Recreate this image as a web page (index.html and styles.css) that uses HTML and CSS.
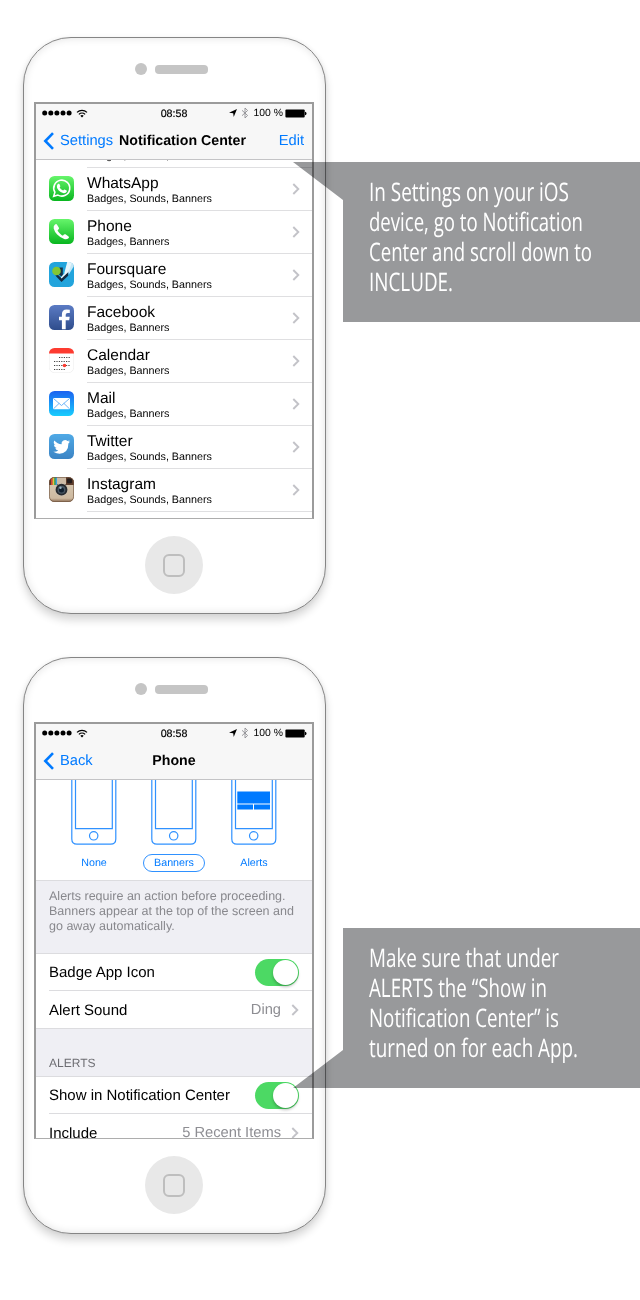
FILE: index.html
```html
<!DOCTYPE html>
<html lang="en">
<head>
<meta charset="utf-8">
<title>Notification Center setup</title>
<link rel="stylesheet" href="styles.css">
</head>
<body>
<svg class="defs" aria-hidden="true">
  <defs>
    <linearGradient id="green" x1="0" y1="0" x2="0" y2="1"><stop offset="0" stop-color="#66f56b"/><stop offset="1" stop-color="#08b61f"/></linearGradient>
    <linearGradient id="navy" x1="0" y1="0" x2="0" y2="1"><stop offset="0" stop-color="#5b7bc4"/><stop offset="1" stop-color="#2f4d8c"/></linearGradient>
    <linearGradient id="sky" x1="0" y1="0" x2="0" y2="1"><stop offset="0" stop-color="#1b62f0"/><stop offset="1" stop-color="#18cdfd"/></linearGradient>
    <linearGradient id="tweet" x1="0" y1="0" x2="0" y2="1"><stop offset="0" stop-color="#4fa9e6"/><stop offset="1" stop-color="#3b84c4"/></linearGradient>
    <linearGradient id="tan" x1="0" y1="0" x2="0" y2="1"><stop offset="0" stop-color="#d9cdb8"/><stop offset=".85" stop-color="#cdb9a0"/><stop offset="1" stop-color="#8a6a50"/></linearGradient>
    <clipPath id="tile"><rect width="25" height="25" rx="5.5"/></clipPath>
    <symbol id="chevron" viewBox="0 0 8 12"><path d="M1.300 1l5 5-5 5" fill="none" stroke="#c3c3c8" stroke-width="1.900"/></symbol>
    <symbol id="back" viewBox="0 0 12 18"><path d="M10 1.200L2.300 9l7.700 7.800" fill="none" stroke="#007aff" stroke-width="2.600"/></symbol>
    <symbol id="dots" viewBox="0 0 30 6"><g><circle cx="2.700" cy="3" r="2.500"/><circle cx="8.800" cy="3" r="2.500"/><circle cx="14.900" cy="3" r="2.500"/><circle cx="21" cy="3" r="2.500"/><circle cx="27.100" cy="3" r="2.500"/></g></symbol>
    <symbol id="wifi" viewBox="0 0 12 9"><path d="M1 3.400a7.300 7.300 0 0 1 10 0M2.900 5.400a4.500 4.500 0 0 1 6.200 0" fill="none" stroke="#000" stroke-width="1.300"/><path d="M4.300 6.800a2.400 2.400 0 0 1 3.400 0L6 8.600z"/></symbol>
    <symbol id="locate" viewBox="0 0 8 8"><path d="M8 0L4.700 8 4.200 4.200 0 3.700z"/></symbol>
    <symbol id="bluetooth" viewBox="0 0 8 12"><path d="M1 3.300l5.600 5.200L4 11V1l2.600 2.500L1 8.700" fill="none" stroke="#8e8e93" stroke-width=".9"/></symbol>
    <symbol id="battery" viewBox="0 0 22 9"><rect x=".4" y=".5" width="19.300" height="8" rx="1"/><path d="M20 2.700q1.500.3 1.500 1.800T20 6.300z"/></symbol>
    <symbol id="handset" viewBox="0 0 46 70"><g fill="none" stroke="#2f91ff" stroke-width="1.200"><path d="M.8 0v59q0 5.200 5.200 5.200h33.600q5.200 0 5.200-5.200V0"/><path d="M4.500 0v48.700h36.800V0"/><circle cx="22.700" cy="55.800" r="4.200"/></g></symbol>
  </defs>
</svg>
<main class="guide">
  <section class="step">
    <div class="phone">
      <div class="speaker"><i class="camera"></i><i class="slot"></i></div>
      <div class="screen">
        <header class="bar">
          <div class="status"><span class="signal"><svg class="dots"><use href="#dots"/></svg><svg class="wifi"><use href="#wifi"/></svg></span><span class="time">08:58</span><span class="power"><svg class="locate"><use href="#locate"/></svg><svg class="bluetooth"><use href="#bluetooth"/></svg><span class="charge">100 %</span><svg class="battery"><use href="#battery"/></svg></span></div>
          <nav class="nav"><span class="back"><svg><use href="#back"/></svg>Settings</span><span class="title">Notification Center</span><span class="edit">Edit</span></nav>
        </header>
        <div class="apps">
          <div class="app"><span class="icon"></span><div class="info"><div><p class="name">&nbsp;</p><p class="kinds">Badges, Sounds, Banners</p></div></div></div>
          <div class="app">
            <svg class="icon" viewBox="0 0 25 25"><rect width="25" height="25" rx="5.500" fill="url(#green)"/><path d="M4.700 20.300l1.200-4.100a8 8 0 1 1 3 2.900z" fill="none" stroke="#fff" stroke-width="1.600"/><path d="M9.300 7.800q.7-.4 1.100.2l.9 2q.2.500-.7 1.500 1.100 2.100 3.500 3.100 1-1.300 1.500-1.200l2 1q.5.300.2 1.100-.9 1.900-3.100 1.700-2.800-.4-5.200-3-2-2.500-1.600-4.300.4-1.500 1.400-2.100z" fill="#fff"/></svg>
            <div class="info"><div><p class="name">WhatsApp</p><p class="kinds">Badges, Sounds, Banners</p></div><svg class="chevron"><use href="#chevron"/></svg></div>
          </div>
          <div class="app">
            <svg class="icon" viewBox="0 0 25 25"><rect width="25" height="25" rx="5.500" fill="url(#green)"/><path d="M6 5.500q1.200-1 1.900-.1l2 3.300q.4.900-.3 1.500l-.8.700q-.4.500 0 1.200 1.700 2.700 4.300 4.300.7.400 1.200-.1l.6-.7q.7-.7 1.600-.3l3.100 2.100q.9.700-.1 1.800-1.900 1.700-4.300.9-4.100-1.500-7-4.500Q5.500 12.700 4.700 9.500q-.5-2.500 1.300-4z" fill="#fff"/></svg>
            <div class="info"><div><p class="name">Phone</p><p class="kinds">Badges, Banners</p></div><svg class="chevron"><use href="#chevron"/></svg></div>
          </div>
          <div class="app">
            <svg class="icon" viewBox="0 0 25 25"><g clip-path="url(#tile)"><rect width="25" height="25" fill="#22a4dc"/><path d="M19.500 0H25v4l-5.500 9z" fill="#c4e8f7"/><path d="M18.200 0h4.800l-4.200 12.500-3.500-1.500z" fill="#e7f5fb"/><path d="M10.500 5.500h3.300v7.700l-1.300 1.200-2.500-2z" fill="#173247"/><path d="M12.500 15.200L17.500 10l1.600 2.700-6.600 6z" fill="#ecf7fb"/><path d="M6.300 13.500l2.500-.8 3.700 3.500 6.700-6v3.600L12.500 20z" fill="#142c43"/><path d="M11.800 15.500L17.200 9.500l1 .8-5.700 6.300z" fill="#eef8fb"/><circle cx="7.500" cy="9" r="4.300" fill="#83c632"/></g></svg>
            <div class="info"><div><p class="name">Foursquare</p><p class="kinds">Badges, Sounds, Banners</p></div><svg class="chevron"><use href="#chevron"/></svg></div>
          </div>
          <div class="app">
            <svg class="icon" viewBox="0 0 25 25"><g clip-path="url(#tile)"><rect width="25" height="25" fill="url(#navy)"/><path d="M12.900 24.300v-9H10v-3.500h2.900V9.400q0-4.800 4.700-4.900l3.200.2v3.200h-2.100q-2 0-2 1.900v2h4l-.5 3.500h-3.500v9z" fill="#fff"/></g></svg>
            <div class="info"><div><p class="name">Facebook</p><p class="kinds">Badges, Banners</p></div><svg class="chevron"><use href="#chevron"/></svg></div>
          </div>
          <div class="app">
            <svg class="icon" viewBox="0 0 25 25"><rect x=".3" y=".3" width="24.400" height="24.400" rx="5.300" fill="#fff" stroke="#e6e6e6" stroke-width=".5"/><path d="M0 5.500A5.500 5.500 0 0 1 5.500 0h14A5.500 5.500 0 0 1 25 5.500z" fill="#fd3b30"/><g stroke="#444" stroke-width="1.200" stroke-dasharray="1.200 1.200"><path d="M10 9.500h11M5 13.500h16M5 17.500h16M5 21.500h11"/></g><circle cx="15.500" cy="17.500" r="1.800" fill="#fd3b30"/></svg>
            <div class="info"><div><p class="name">Calendar</p><p class="kinds">Badges, Banners</p></div><svg class="chevron"><use href="#chevron"/></svg></div>
          </div>
          <div class="app">
            <svg class="icon" viewBox="0 0 25 25"><rect width="25" height="25" rx="5.500" fill="url(#sky)"/><rect x="4" y="7" width="17" height="11.200" rx="1" fill="#fff"/><path d="M4.500 7.500l8 7 8-7M4.500 17.800l5.700-5.500M20.500 17.800l-5.700-5.500" fill="none" stroke="#4ba3f6" stroke-width=".8"/></svg>
            <div class="info"><div><p class="name">Mail</p><p class="kinds">Badges, Banners</p></div><svg class="chevron"><use href="#chevron"/></svg></div>
          </div>
          <div class="app">
            <svg class="icon" viewBox="0 0 25 25"><rect width="25" height="25" rx="5.500" fill="url(#tweet)"/><path d="M21 7.500q-.8.400-1.800.5 1-.6 1.400-1.800-1 .6-2.100.8a3.500 3.500 0 0 0-5.900 3.200Q8.500 10 5.300 6.400q-1.500 2.900 1.100 4.700l-1.500-.4q.2 2.600 2.700 3.300-.7.200-1.500.1.800 2.100 3.200 2.300-2.200 1.700-5 1.400 7.600 4.100 12.800-.9 2.400-2.900 2.300-7.500 1-.7 1.600-1.900z" fill="#fff"/></svg>
            <div class="info"><div><p class="name">Twitter</p><p class="kinds">Badges, Sounds, Banners</p></div><svg class="chevron"><use href="#chevron"/></svg></div>
          </div>
          <div class="app">
            <svg class="icon" viewBox="0 0 25 25"><g clip-path="url(#tile)"><rect width="25" height="25" fill="url(#tan)"/><path d="M0 0h25v8H0z" fill="#5c3b2b"/><path d="M2 0h1.500v8H2z" fill="#d9403a"/><path d="M3.500 0H5v8H3.500z" fill="#e8c03a"/><path d="M5 0h1.500v8H5z" fill="#50ad50"/><path d="M6.500 0H8v8H6.500z" fill="#36a5dc"/><path d="M8 0h9v7H8z" fill="#cdbba6"/><rect x="18" y="1.500" width="5" height="4.800" rx="1.300" fill="#231c1c"/></g><circle cx="12.500" cy="12.700" r="6.500" fill="#c9bfb0"/><circle cx="12.500" cy="12.700" r="5.900" fill="#272a2e"/><circle cx="12.500" cy="12.700" r="4" fill="#465562"/><circle cx="12.500" cy="12.900" r="2.500" fill="#111f2d"/><circle cx="11.500" cy="10.800" r="1.200" fill="#9bb3c1"/><rect x=".4" y=".4" width="24.200" height="24.200" rx="5.200" fill="none" stroke="#735744" stroke-width=".7"/></svg>
            <div class="info"><div><p class="name">Instagram</p><p class="kinds">Badges, Sounds, Banners</p></div><svg class="chevron"><use href="#chevron"/></svg></div>
          </div>
        </div>
      </div>
      <div class="home"><i></i></div>
    </div>
    <aside class="callout callout-top">
      <svg class="words" width="270" height="160">
        <text x="0" y="39" textLength="200" lengthAdjust="spacingAndGlyphs">In Settings on your iOS</text>
        <text x="0" y="69" textLength="214" lengthAdjust="spacingAndGlyphs">device, go to Notification</text>
        <text x="0" y="99" textLength="223" lengthAdjust="spacingAndGlyphs">Center and scroll down to</text>
        <text x="0" y="129" textLength="84" lengthAdjust="spacingAndGlyphs">INCLUDE.</text>
      </svg>
    </aside>
  </section>
  <section class="step">
    <div class="phone">
      <div class="speaker"><i class="camera"></i><i class="slot"></i></div>
      <div class="screen">
        <header class="bar">
          <div class="status"><span class="signal"><svg class="dots"><use href="#dots"/></svg><svg class="wifi"><use href="#wifi"/></svg></span><span class="time">08:58</span><span class="power"><svg class="locate"><use href="#locate"/></svg><svg class="bluetooth"><use href="#bluetooth"/></svg><span class="charge">100 %</span><svg class="battery"><use href="#battery"/></svg></span></div>
          <nav class="nav"><span class="back"><svg><use href="#back"/></svg>Back</span><span class="title">Phone</span><span class="edit"></span></nav>
        </header>
        <div class="styles">
          <div class="style"><svg class="handset"><use href="#handset"/></svg><span>None</span></div>
          <div class="style chosen"><svg class="handset"><use href="#handset"/></svg><span>Banners</span></div>
          <div class="style"><svg class="handset"><use href="#handset"/><path d="M6.300 11.500h32.700v12H6.300zM6.300 24.500h15.700v5H6.300zM23 24.500h16v5H23z" fill="#007aff"/></svg><span>Alerts</span></div>
        </div>
        <p class="note">Alerts require an action before proceeding.<br>Banners appear at the top of the screen and<br>go away automatically.</p>
        <div class="group">
          <div class="setting"><span>Badge App Icon</span><i class="toggle"></i></div>
          <div class="setting"><span>Alert Sound</span><span class="value">Ding</span><svg class="chevron"><use href="#chevron"/></svg></div>
        </div>
        <h2 class="heading">ALERTS</h2>
        <div class="group">
          <div class="setting"><span>Show in Notification Center</span><i class="toggle"></i></div>
          <div class="setting"><span>Include</span><span class="value">5 Recent Items</span><svg class="chevron"><use href="#chevron"/></svg></div>
        </div>
      </div>
      <div class="home"><i></i></div>
    </div>
    <aside class="callout callout-bottom">
      <svg class="words" width="270" height="160">
        <text x="0" y="39" textLength="190" lengthAdjust="spacingAndGlyphs">Make sure that under</text>
        <text x="0" y="69" textLength="178" lengthAdjust="spacingAndGlyphs">ALERTS the “Show in</text>
        <text x="0" y="99" textLength="190" lengthAdjust="spacingAndGlyphs">Notification Center” is</text>
        <text x="0" y="129" textLength="209" lengthAdjust="spacingAndGlyphs">turned on for each App.</text>
      </svg>
    </aside>
  </section>
</main>
</body>
</html>
```

FILE: styles.css
```css
* { box-sizing: border-box; }
body { margin: 0; background: #fff; color: #000; font-family: "Liberation Sans", Arial, sans-serif; text-rendering: geometricPrecision; }
p, h2 { margin: 0; font-weight: 400; }
svg { display: block; flex: none; }
.defs { width: 0; height: 0; position: absolute; }

.guide { width: 640px; height: 1300px; overflow: hidden; padding: 37px 0 0 23px; display: flex; flex-direction: column; gap: 43px; }
.step { display: flex; height: 577px; isolation: isolate; background: #fff; }

.phone {
  flex: none; width: 303px; height: 577px; padding: 26px 0 0 10px;
  border: 1px solid #858585; border-radius: 48px; background: #fff;
  box-shadow: 0 6px 8px rgba(0,0,0,.16), 0 0 5px rgba(0,0,0,.05), inset 0 0 9px rgba(0,0,0,.12);
}
.speaker { display: flex; align-items: center; gap: 8px; height: 12px; margin: -1px 0 27px 101px; }
.camera { width: 12px; height: 12px; border-radius: 50%; background: #c5c5c5; }
.slot { width: 53px; height: 9px; border-radius: 4px; background: #c5c5c5; }
.screen { width: 280px; height: 417px; overflow: hidden; border: 2px solid #9b9b9b; border-bottom: 1px solid #adadad; display: flex; flex-direction: column; background: #fff; }
.home { display: flex; align-items: center; justify-content: center; width: 58px; height: 58px; margin: 17px 0 0 111px; border-radius: 50%; background: #e8e8e8; }
.home i { width: 22px; height: 23px; border: 2px solid #bebebe; border-radius: 6px; }

.bar { flex: none; height: 56px; background: #f7f7f7; border-bottom: 1px solid #c4c4c6; }
.status { display: grid; grid-template-columns: 1fr auto 1fr; align-items: center; height: 18px; padding: 0 5px 0 6px; font-size: 10.700px; }
.signal { display: flex; align-items: center; gap: 4px; }
.dots { width: 30px; height: 6px; }
.wifi { width: 12px; height: 9px; }
.time { margin-left: -1px; padding-top: 1px; -webkit-text-stroke: .2px #000; }
.power { display: flex; align-items: center; justify-content: flex-end; }
.locate { width: 8px; height: 8px; }
.bluetooth { width: 8px; height: 12px; margin: 0 5px 0 4px; }
.charge { padding-top: 1px; white-space: nowrap; font-size: 10.400px; }
.battery { width: 22px; height: 9px; margin-left: 2px; }
.nav { display: grid; grid-template-columns: 1fr auto 1fr; align-items: center; height: 37px; font-size: 14.700px; }
.back { display: flex; align-items: center; gap: 5px; padding: 0 6px 0 7px; color: #007aff; }
.back svg { width: 12px; height: 18px; }
.title { padding-top: 1px; font-weight: 700; font-size: 14.200px; }
.edit { justify-self: end; padding-right: 8px; color: #007aff; }

.apps { flex: 1; min-height: 0; display: flex; flex-direction: column; justify-content: flex-end; overflow: hidden; padding-bottom: 6px; }
.app { flex: none; display: flex; height: 43px; padding-left: 13px; gap: 13px; }
.icon { flex: none; width: 25px; height: 25px; margin-top: 8px; }
.info { flex: 1; display: flex; justify-content: space-between; padding: 7px 12px 0 0; border-bottom: 1px solid #dfdfe1; }
.name { font-size: 15.500px; line-height: 18px; }
.kinds { font-size: 10.750px; line-height: 13px; }
.chevron { width: 8px; height: 12px; }
.app .chevron { margin-top: 8px; }

.styles { flex: none; display: flex; height: 101px; padding-left: 35px; gap: 34px; border-bottom: 1px solid #dcdcdf; }
.style { width: 46px; display: flex; flex-direction: column; align-items: center; color: #007aff; font-size: 10.700px; }
.handset { width: 46px; height: 70px; }
.style span { margin-top: 4px; height: 18px; line-height: 16px; padding: 0 10px; border: 1px solid transparent; border-radius: 9px; }
.chosen span { border-color: #2f91ff; }

.note { flex: none; height: 72px; padding: 8px 0 0 13px; background: #efeff4; color: #88888d; font-size: 12.520px; line-height: 15.200px; white-space: nowrap; }
.group { flex: none; border-top: 1px solid #dcdcdf; border-bottom: 1px solid #dcdcdf; }
.setting { display: flex; align-items: center; height: 36px; margin-left: 13px; padding-right: 13px; font-size: 15px; }
.setting + .setting { height: 38px; padding-top: 1px; border-top: 1px solid #dcdcdf; }
.toggle { flex: none; width: 44px; height: 27px; margin-left: auto; border-radius: 14px; background: #4cd964; display: flex; justify-content: flex-end; padding: 1px; }
.toggle::after { content: ""; width: 25px; height: 25px; border-radius: 50%; background: #fff; box-shadow: 0 2px 3px rgba(0,0,0,.25); }
.value { margin-left: auto; margin-right: 10px; color: #8e8e93; font-size: 14.700px; }
.heading { flex: none; height: 47px; padding: 27px 0 0 13px; background: #efeff4; color: #6d6d72; font-size: 12px; line-height: 15px; }

.callout { flex: none; width: 347px; height: 160px; margin-left: -33px; padding-left: 76px; background: #98999b; mix-blend-mode: multiply; }
.callout-top { margin-top: 125px; clip-path: polygon(0 0, 100% 0, 100% 100%, 50px 100%, 50px 38px); }
.callout-bottom { margin-top: 271px; clip-path: polygon(50px 0, 100% 0, 100% 100%, 0 100%, 50px 122px); }
.words { font-family: "Open Sans", "Noto Sans", sans-serif; font-size: 25.500px; font-weight: 400; fill: #fff; }
```
